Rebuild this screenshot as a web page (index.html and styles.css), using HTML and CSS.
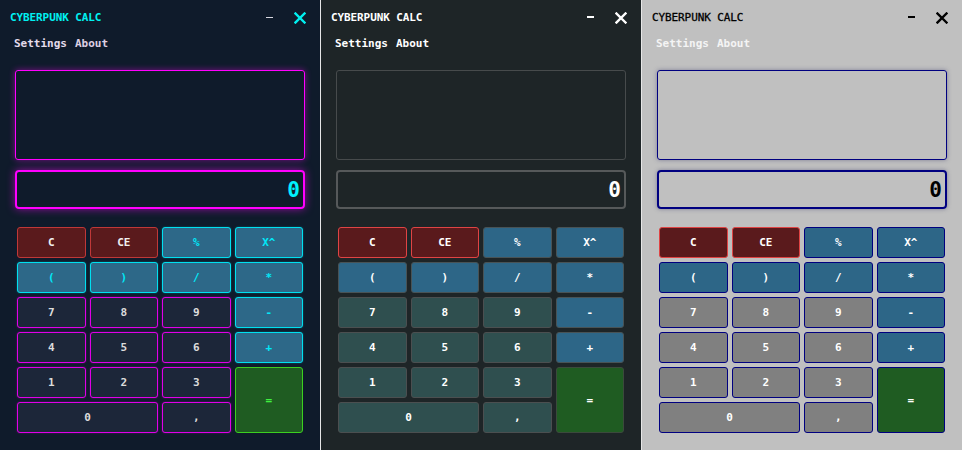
FILE: index.html
```html
<!DOCTYPE html>
<html>
<head>
<meta charset="utf-8">
<link rel="stylesheet" href="styles.css">
</head>
<body>
<div class="screen">
  <section class="calc t-cyber">
    <header class="titlebar">
      <span class="title">CYBERPUNK CALC</span>
      <div class="win-ctrls">
        <span class="min"></span>
        <svg class="close" viewBox="0 0 12 12"><path d="M1.5 1.5 10.5 10.5M10.5 1.5 1.5 10.5"/></svg>
      </div>
    </header>
    <nav class="menu"><span>Settings</span><span class="alt">About</span></nav>
    <div class="history"></div>
    <div class="display">0</div>
    <div class="keys">
      <button class="k clr">C</button><button class="k clr">CE</button><button class="k op">%</button><button class="k op">X^</button>
      <button class="k op">(</button><button class="k op">)</button><button class="k op">/</button><button class="k op">*</button>
      <button class="k num">7</button><button class="k num">8</button><button class="k num">9</button><button class="k op">-</button>
      <button class="k num">4</button><button class="k num">5</button><button class="k num">6</button><button class="k op">+</button>
      <button class="k num">1</button><button class="k num">2</button><button class="k num">3</button><button class="k eq">=</button>
      <button class="k num zero">0</button><button class="k num">,</button>
    </div>
  </section>
  <section class="calc t-dark">
    <header class="titlebar">
      <span class="title">CYBERPUNK CALC</span>
      <div class="win-ctrls">
        <span class="min"></span>
        <svg class="close" viewBox="0 0 12 12"><path d="M1.5 1.5 10.5 10.5M10.5 1.5 1.5 10.5"/></svg>
      </div>
    </header>
    <nav class="menu"><span>Settings</span><span class="alt">About</span></nav>
    <div class="history"></div>
    <div class="display">0</div>
    <div class="keys">
      <button class="k clr">C</button><button class="k clr">CE</button><button class="k op">%</button><button class="k op">X^</button>
      <button class="k op">(</button><button class="k op">)</button><button class="k op">/</button><button class="k op">*</button>
      <button class="k num">7</button><button class="k num">8</button><button class="k num">9</button><button class="k op">-</button>
      <button class="k num">4</button><button class="k num">5</button><button class="k num">6</button><button class="k op">+</button>
      <button class="k num">1</button><button class="k num">2</button><button class="k num">3</button><button class="k eq">=</button>
      <button class="k num zero">0</button><button class="k num">,</button>
    </div>
  </section>
  <section class="calc t-light">
    <header class="titlebar">
      <span class="title">CYBERPUNK CALC</span>
      <div class="win-ctrls">
        <span class="min"></span>
        <svg class="close" viewBox="0 0 12 12"><path d="M1.5 1.5 10.5 10.5M10.5 1.5 1.5 10.5"/></svg>
      </div>
    </header>
    <nav class="menu"><span>Settings</span><span class="alt">About</span></nav>
    <div class="history"></div>
    <div class="display">0</div>
    <div class="keys">
      <button class="k clr">C</button><button class="k clr">CE</button><button class="k op">%</button><button class="k op">X^</button>
      <button class="k op">(</button><button class="k op">)</button><button class="k op">/</button><button class="k op">*</button>
      <button class="k num">7</button><button class="k num">8</button><button class="k num">9</button><button class="k op">-</button>
      <button class="k num">4</button><button class="k num">5</button><button class="k num">6</button><button class="k op">+</button>
      <button class="k num">1</button><button class="k num">2</button><button class="k num">3</button><button class="k eq">=</button>
      <button class="k num zero">0</button><button class="k num">,</button>
    </div>
  </section>
</div>
</body>
</html>
```
FILE: styles.css
```css
* { box-sizing: border-box; }
html, body { margin: 0; padding: 0; }
body {
  width: 962px;
  height: 450px;
  overflow: hidden;
  background: #e6e6e6;
  font-family: "DejaVu Sans Mono", "Liberation Mono", monospace;
}
.screen {
  display: flex;
  gap: 1px;
  height: 450px;
}
.calc {
  width: 320px;
  height: 450px;
  flex: none;
  display: flex;
  flex-direction: column;
}
.titlebar {
  height: 34px;
  display: flex;
  align-items: center;
  padding: 0 14px 0 10px;
}
.title {
  font-size: 11px;
  font-weight: bold;
  letter-spacing: -0.1px;
}
.win-ctrls {
  margin-left: auto;
  display: flex;
  align-items: center;
  gap: 21px;
  padding-top: 1px;
}
.min {
  display: block;
  width: 7px;
  height: 1px;
  margin-top: -1px;
}
.close {
  width: 12px;
  height: 12px;
  display: block;
  fill: none;
  stroke-width: 2.4;
  stroke-linecap: square;
}
.menu {
  height: 18px;
  display: flex;
  align-items: center;
  gap: 8px;
  padding-left: 14px;
  font-size: 11px;
  font-weight: bold;
}
.history {
  margin: 18px 15px 0;
  height: 90px;
  border: 1px solid;
  border-radius: 3px;
}
.display {
  margin: 10px 15px 0;
  height: 39px;
  border: 2px solid;
  border-radius: 4px;
  display: flex;
  align-items: center;
  justify-content: flex-end;
  padding-right: 3px;
  font-size: 21px;
  font-weight: bold;
}
.keys {
  margin-top: 18px;
  padding: 0 17px;
  display: grid;
  grid-template-columns: repeat(4, 1fr);
  grid-auto-rows: 31px;
  gap: 4px;
}
.k {
  margin: 0;
  padding: 0;
  border: 1px solid;
  border-radius: 3px;
  font-family: "DejaVu Sans Mono", "Liberation Mono", monospace;
  font-size: 11px;
  font-weight: bold;
}
.eq { grid-column: 4; grid-row: 5 / span 2; }
.zero { grid-column: 1 / span 2; }

/* Cyber theme */
.t-cyber { background: #0f1b2b; }
.t-cyber .title { color: #00f0f0; }
.t-cyber .min { background: #d8d8e0; }
.t-cyber .close { stroke: #00f0f0; }
.t-cyber .menu { color: #e4dcec; }
.t-cyber .menu .alt { color: #dccfe2; }
.t-cyber .history {
  border-color: #ff00ff;
  box-shadow: 0 0 6px rgba(255, 0, 255, 0.45);
}
.t-cyber .display {
  border-color: #ff00ff;
  color: #00f0ff;
  box-shadow: 0 0 8px rgba(255, 0, 255, 0.55);
}
.t-cyber .num { background: #1c2639; border-color: #e000e8; color: #dcdcdc; box-shadow: 0 0 2px rgba(255,0,255,0.35); }
.t-cyber .op { background: #2d6888; border-color: #00e0f0; color: #00e8f8; box-shadow: 0 0 2px rgba(0,240,255,0.35); }
.t-cyber .clr { background: #5a1a1c; border-color: #c03838; color: #f0f0f0; }
.t-cyber .eq { background: #1f5c22; border-color: #3cd020; color: #40f040; }

/* Dark theme */
.t-dark { background: #1e2527; }
.t-dark .title { color: #ffffff; }
.t-dark .min { background: #ffffff; height: 2px; }
.t-dark .close { stroke: #ffffff; }
.t-dark .menu { color: #ffffff; }
.t-dark .history { border-color: #474b4c; }
.t-dark .display { border-color: #56595a; color: #ffffff; }
.t-dark .num { background: #2f4f4f; border-color: #4b4f50; color: #ffffff; }
.t-dark .op { background: #2d6687; border-color: #485356; color: #ffffff; }
.t-dark .clr { background: #5a1a1c; border-color: #e04444; color: #ffffff; }
.t-dark .eq { background: #1f5c22; border-color: #3b4a3c; color: #ffffff; }

/* Light theme */
.t-light { background: #c0c0c0; }
.t-light .title { color: #000000; font-weight: normal; -webkit-text-stroke: 0.3px #000; }
.t-light .min { background: #000000; height: 1.5px; }
.t-light .close { stroke: #000000; }
.t-light .menu { color: #f4f4f4; }
.t-light .history {
  border-color: #000080;
  box-shadow: 0 0 4px rgba(60, 60, 110, 0.5);
}
.t-light .display {
  border-color: #000080;
  color: #000000;
  box-shadow: 0 0 4px rgba(60, 60, 110, 0.5);
}
.t-light .num { background: #808080; border-color: #000080; color: #ffffff; }
.t-light .op { background: #2d6687; border-color: #000080; color: #ffffff; }
.t-light .clr { background: #5a1a1c; border-color: #e04444; color: #ffffff; }
.t-light .eq { background: #1f5c22; border-color: #000080; color: #ffffff; }
```
